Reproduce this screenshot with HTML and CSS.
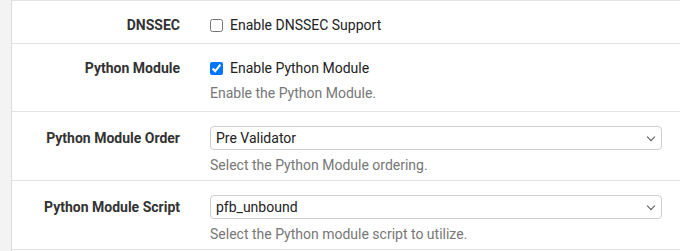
FILE: index.html
```html
<!DOCTYPE html>
<html lang="en">
<head>
  <meta charset="UTF-8">
  <title>DNS Resolver | General Settings</title>
  <link rel="stylesheet" href="styles.css">
</head>
<body>
  <div class="panel">
    <!-- DNSSEC -->
    <div class="form-row is-check">
      <label class="row-label" for="dnssec">DNSSEC</label>
      <div class="row-field">
        <label class="check">
          <input type="checkbox" id="dnssec">
          Enable DNSSEC Support
        </label>
      </div>
    </div>

    <!-- Python module -->
    <div class="form-row is-check">
      <label class="row-label" for="python">Python Module</label>
      <div class="row-field">
        <label class="check">
          <input type="checkbox" id="python" checked>
          Enable Python Module
        </label>
        <span class="help">Enable the Python Module.</span>
      </div>
    </div>

    <div class="form-row">
      <label class="row-label" for="python_order">Python Module Order</label>
      <div class="row-field">
        <div class="select-wrap">
          <select id="python_order">
            <option selected>Pre Validator</option>
            <option>Post Validator</option>
          </select>
        </div>
        <span class="help">Select the Python Module ordering.</span>
      </div>
    </div>

    <div class="form-row">
      <label class="row-label" for="python_script">Python Module Script</label>
      <div class="row-field">
        <div class="select-wrap">
          <select id="python_script">
            <option selected>pfb_unbound</option>
          </select>
        </div>
        <span class="help">Select the Python module script to utilize.</span>
      </div>
    </div>
  </div>
</body>
</html>
```

FILE: styles.css
```css
* {
  box-sizing: border-box;
  margin: 0;
  padding: 0;
}

body {
  background-color: #f3f3f3;
  font-family: 'Roboto', sans-serif;
  font-size: 14px;
  line-height: 20px;
  color: #212121;
}

.panel {
  margin-left: 11px;
  border-left: 1px solid #dcdcdc;
  background-color: #fff;
  min-height: 251px;
}

.form-row {
  display: grid;
  grid-template-columns: 168px 1fr;
  column-gap: 30px;
  border-top: 1px solid #e3e3e3;
  padding: 14px 18px 5px 0;
}

.form-row.is-check {
  padding-bottom: 8px;
}

.form-row:last-child {
  border-bottom: 1px solid #e3e3e3;
}

.row-label {
  text-align: right;
  font-weight: 700;
  color: #333;
  line-height: 24px;
}

.is-check .row-label {
  line-height: 20px;
}

.row-field {
  display: flex;
  flex-direction: column;
}

.check {
  display: flex;
  align-items: center;
  gap: 7px;
  color: #222;
}

.check input {
  width: 13px;
  height: 13px;
  margin: 0;
}

.help {
  margin-top: 5px;
  color: #777;
}

.select-wrap {
  position: relative;
}

/* small chevron on the right of the select */
.select-wrap::after {
  content: "";
  position: absolute;
  right: 8px;
  top: 8px;
  width: 5px;
  height: 5px;
  border-right: 1px solid #555;
  border-bottom: 1px solid #555;
  transform: rotate(45deg);
  pointer-events: none;
}

select {
  appearance: none;
  -webkit-appearance: none;
  width: 100%;
  height: 24px;
  padding: 0 24px 0 5px;
  border: 1px solid #cfcfcf;
  border-radius: 4px;
  background-color: #fff;
  font-family: inherit;
  font-size: 14px;
  color: #222;
}
```
